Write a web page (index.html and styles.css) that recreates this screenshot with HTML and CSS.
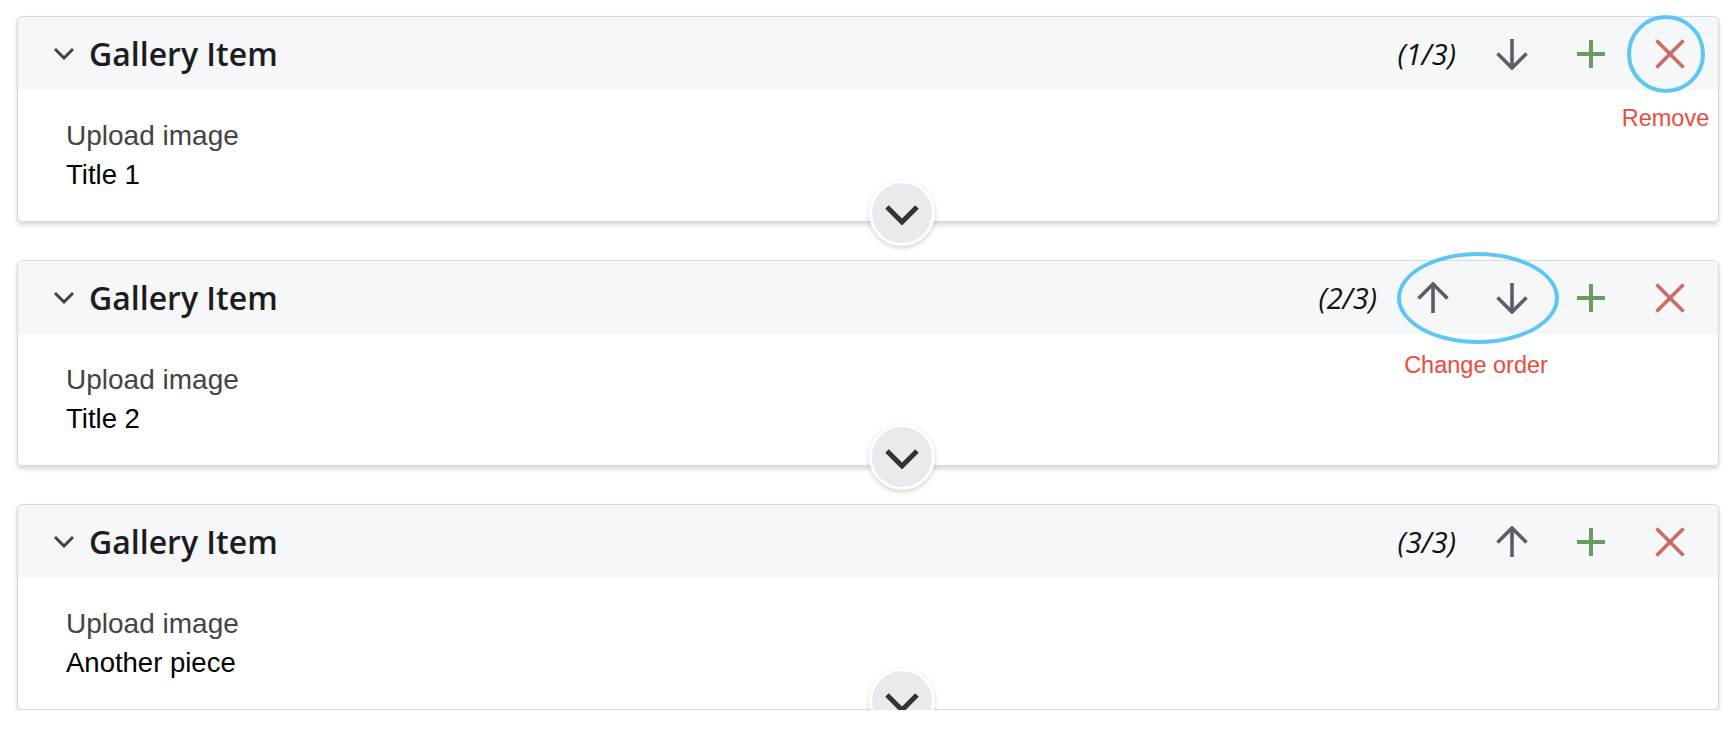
FILE: index.html
```html
<!DOCTYPE html>
<html lang="en">
<head>
<meta charset="utf-8">
<title>Gallery Items</title>
<link rel="stylesheet" href="styles.css">
</head>
<body>
<div class="list">

  <section class="card">
    <header class="card-head">
      <svg class="fold" width="22" height="13" viewBox="0 0 22 13"><polyline points="2,2 11,11 20,2" fill="none" stroke="#444" stroke-width="3"/></svg>
      <h2 class="title">Gallery Item</h2>
      <span class="count">(1/3)</span>
      <div class="actions">
        <button class="act"><svg width="32" height="32" viewBox="0 0 32 32"><line x1="16" y1="1" x2="16" y2="30" stroke="#5b5e66" stroke-width="3.6"/><polyline points="1.5,15.5 16,30 30.5,15.5" fill="none" stroke="#5b5e66" stroke-width="3.6"/></svg></button>
        <button class="act"><svg width="30" height="30" viewBox="0 0 30 30"><line x1="15" y1="1" x2="15" y2="29" stroke="#6b9b61" stroke-width="4"/><line x1="1" y1="15" x2="29" y2="15" stroke="#6b9b61" stroke-width="4"/></svg></button>
        <button class="act act-remove"><svg width="30" height="30" viewBox="0 0 30 30"><line x1="1.5" y1="1.5" x2="28.5" y2="28.5" stroke="#d2675f" stroke-width="3.6"/><line x1="28.5" y1="1.5" x2="1.5" y2="28.5" stroke="#d2675f" stroke-width="3.6"/></svg>
          <span class="ring ring-circle"></span>
          <span class="note note-remove">Remove</span>
        </button>
      </div>
    </header>
    <div class="card-body">
      <div class="label">Upload image</div>
      <div class="value">Title 1</div>
    </div>
    <button class="expand"><svg width="34" height="21" viewBox="0 0 34 21"><polyline points="2,3 17,18 32,3" fill="none" stroke="#333" stroke-width="5"/></svg></button>
  </section>

  <section class="card">
    <header class="card-head">
      <svg class="fold" width="22" height="13" viewBox="0 0 22 13"><polyline points="2,2 11,11 20,2" fill="none" stroke="#444" stroke-width="3"/></svg>
      <h2 class="title">Gallery Item</h2>
      <span class="count">(2/3)</span>
      <div class="actions">
        <div class="order">
          <button class="act"><svg width="32" height="32" viewBox="0 0 32 32"><line x1="16" y1="2" x2="16" y2="31" stroke="#5b5e66" stroke-width="3.6"/><polyline points="1.5,16.5 16,2 30.5,16.5" fill="none" stroke="#5b5e66" stroke-width="3.6"/></svg></button>
          <button class="act"><svg width="32" height="32" viewBox="0 0 32 32"><line x1="16" y1="1" x2="16" y2="30" stroke="#5b5e66" stroke-width="3.6"/><polyline points="1.5,15.5 16,30 30.5,15.5" fill="none" stroke="#5b5e66" stroke-width="3.6"/></svg></button>
          <span class="ring ring-oval"></span>
          <span class="note note-order">Change order</span>
        </div>
        <button class="act"><svg width="30" height="30" viewBox="0 0 30 30"><line x1="15" y1="1" x2="15" y2="29" stroke="#6b9b61" stroke-width="4"/><line x1="1" y1="15" x2="29" y2="15" stroke="#6b9b61" stroke-width="4"/></svg></button>
        <button class="act"><svg width="30" height="30" viewBox="0 0 30 30"><line x1="1.5" y1="1.5" x2="28.5" y2="28.5" stroke="#d2675f" stroke-width="3.6"/><line x1="28.5" y1="1.5" x2="1.5" y2="28.5" stroke="#d2675f" stroke-width="3.6"/></svg></button>
      </div>
    </header>
    <div class="card-body">
      <div class="label">Upload image</div>
      <div class="value">Title 2</div>
    </div>
    <button class="expand"><svg width="34" height="21" viewBox="0 0 34 21"><polyline points="2,3 17,18 32,3" fill="none" stroke="#333" stroke-width="5"/></svg></button>
  </section>

  <section class="card">
    <header class="card-head">
      <svg class="fold" width="22" height="13" viewBox="0 0 22 13"><polyline points="2,2 11,11 20,2" fill="none" stroke="#444" stroke-width="3"/></svg>
      <h2 class="title">Gallery Item</h2>
      <span class="count">(3/3)</span>
      <div class="actions">
        <button class="act"><svg width="32" height="32" viewBox="0 0 32 32"><line x1="16" y1="2" x2="16" y2="31" stroke="#5b5e66" stroke-width="3.6"/><polyline points="1.5,16.5 16,2 30.5,16.5" fill="none" stroke="#5b5e66" stroke-width="3.6"/></svg></button>
        <button class="act"><svg width="30" height="30" viewBox="0 0 30 30"><line x1="15" y1="1" x2="15" y2="29" stroke="#6b9b61" stroke-width="4"/><line x1="1" y1="15" x2="29" y2="15" stroke="#6b9b61" stroke-width="4"/></svg></button>
        <button class="act"><svg width="30" height="30" viewBox="0 0 30 30"><line x1="1.5" y1="1.5" x2="28.5" y2="28.5" stroke="#d2675f" stroke-width="3.6"/><line x1="28.5" y1="1.5" x2="1.5" y2="28.5" stroke="#d2675f" stroke-width="3.6"/></svg></button>
      </div>
    </header>
    <div class="card-body">
      <div class="label">Upload image</div>
      <div class="value">Another piece</div>
    </div>
    <button class="expand"><svg width="34" height="21" viewBox="0 0 34 21"><polyline points="2,3 17,18 32,3" fill="none" stroke="#333" stroke-width="5"/></svg></button>
  </section>

</div>
</body>
</html>
```
FILE: styles.css
```css
html, body {
  margin: 0;
  padding: 0;
  background: #ffffff;
}

body {
  font-family: "Liberation Sans", Arial, sans-serif;
  overflow: hidden;
}

.list {
  display: flex;
  flex-direction: column;
  gap: 38px;
  padding: 16px 17px 0 17px;
}

.card {
  position: relative;
  background: #ffffff;
  border: 1px solid #d5d9de;
  border-radius: 5px;
  box-shadow: 0 3px 5px rgba(0, 0, 0, 0.16);
}

.card-head {
  display: flex;
  align-items: center;
  height: 73px;
  padding: 0 9px 0 35px;
  background: #f6f7f9;
  border-radius: 4px 4px 0 0;
}

.fold {
  display: block;
  flex: none;
  margin-right: 14px;
}

.title {
  margin: 0;
  flex: 1;
  font-family: "Open Sans", "Noto Sans", sans-serif;
  font-weight: 600;
  font-size: 32px;
  color: #1d1d1f;
}

.count {
  font-family: "Open Sans", "Noto Sans", sans-serif;
  font-style: italic;
  font-size: 29px;
  color: #111;
  margin-right: 16px;
}

.actions {
  display: flex;
  align-items: stretch;
  height: 73px;
}

.order {
  position: relative;
  display: flex;
}

.act {
  position: relative;
  width: 79px;
  height: 73px;
  padding: 0;
  border: 0;
  background: transparent;
  display: flex;
  align-items: center;
  justify-content: center;
}

.act svg {
  display: block;
}

.ring {
  position: absolute;
  left: 50%;
  top: 50%;
  box-sizing: border-box;
  border: 4px solid #5ec6f7;
  border-radius: 50%;
  pointer-events: none;
}

.ring-circle {
  width: 78px;
  height: 78px;
  margin: -39px 0 0 -43px;
}

.ring-oval {
  width: 162px;
  height: 92px;
  margin: -46px 0 0 -75px;
}

.note {
  position: absolute;
  font-family: "Liberation Sans", Arial, sans-serif;
  font-size: 23.5px;
  line-height: 26px;
  color: #e84c3d;
  white-space: nowrap;
  transform: translateX(-50%);
}

.note-remove {
  top: 88px;
  left: calc(50% - 4px);
}

.note-order {
  top: 91px;
  left: calc(50% + 4px);
}

.card-body {
  padding: 30px 48px 30px;
}

.label {
  font-size: 28px;
  line-height: 32px;
  color: #444;
}

.value {
  margin-top: 7px;
  font-size: 27.5px;
  line-height: 32px;
  color: #000;
}

.expand {
  position: absolute;
  left: calc(50% + 1px);
  bottom: -25px;
  width: 66px;
  height: 66px;
  padding: 0;
  box-sizing: border-box;
  border: 3px solid #ffffff;
  border-radius: 50%;
  background: #e9eaed;
  box-shadow: 0 2px 5px rgba(0, 0, 0, 0.18);
  display: flex;
  align-items: center;
  justify-content: center;
}

.expand svg {
  display: block;
  margin-top: 2px;
}
```
